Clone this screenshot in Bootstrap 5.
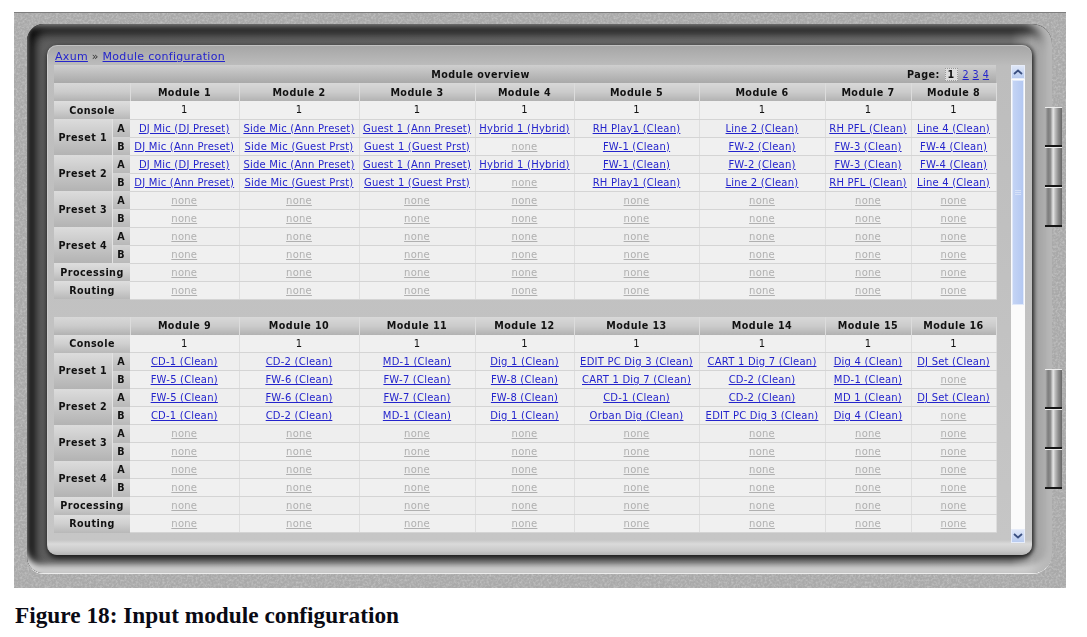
<!DOCTYPE html>
<html lang="en">
<head>
<meta charset="utf-8">
<title>Figure 18: Input module configuration</title>
<link rel="stylesheet" href="https://cdn.jsdelivr.net/npm/bootstrap@5.3.0/dist/css/bootstrap.min.css">
<style>
html,body{background:#fff;margin:0;overflow:hidden}
body{font-family:"DejaVu Sans",Verdana,sans-serif;font-size:10px;color:#111}
.shot{width:1052px;height:576px;margin:12px 0 0 14px;padding:11px 14px 15px 13px;background:#a9a9a9;position:relative;border-top:1px solid #7d7d7d;overflow:hidden;filter:blur(.3px)}
.grain{position:absolute;inset:0;width:100%;height:100%;opacity:.42}
.bezel{position:relative;height:549px;padding:21px 20px 18px 20px;border-radius:17px 20px 20px 16px;background:linear-gradient(to right,#5e5e5e 0,#747474 96%,#a6a6a6 98%,#9a9a9a 100%);
box-shadow:inset -9px 0 8px 1px #b8b8b8,inset 0 -9px 6px -1px #dcdcdc,inset 0 9px 11px #0a0a0a,inset 8px 0 10px #161616,0 1px 0 #ececec}
.panel{height:510px;border-radius:10px;padding:4px 7px 12px 7px;background:linear-gradient(to bottom,#a6a6a6 0,#bdbdbd 20px,#c6c6c6 494px,#dadada 498px,#c8c8c8 505px,#b4b4b4 509px);border-top:1px solid #c2c2c2;border-left:1px solid #cfcfcf;box-shadow:0 3px 5px 0 #1c1c1c,2px 0 4px #4a4a4a}
.crumb{height:15px;line-height:14px;font-size:11px;letter-spacing:.3px;color:#333}
.crumb a{color:#2424cc}
.pane{height:478px;margin-left:-1px}
.grid-wrap{width:942px}
.scroll{width:14px;margin-left:15px;background:#fbfbfb;position:relative;flex:none}
.thumb{height:225px;margin:15px 1px 0 1px;background:linear-gradient(to right,#c4d4f4,#b4c8f2);border:1px solid #dfe8fa;display:flex;flex-direction:column;justify-content:center;align-items:center;gap:1px}
.thumb i{display:block;width:6px;height:1px;background:#d6e1f8}
.sbtn{position:absolute;left:0;right:0;height:14px;background:linear-gradient(#dfe7f8,#b8cbf0);border:1px solid #e7edfa}
.sbtn svg{display:block;margin:3px auto 0}
.sbtn.up{top:0}.sbtn.dn{bottom:0}
table.mods{table-layout:fixed;width:942px;margin:0;border-collapse:collapse;--bs-table-bg:transparent;--bs-table-color:#111;--bs-table-border-color:#d6d6d6}
table.mods>*>tr>*{height:18px;padding:0;border:0;vertical-align:middle;text-align:center;line-height:17px;font-size:10px;letter-spacing:.22px;white-space:nowrap;overflow:hidden}
table.mods td{background:#f0f0f0;border-bottom:1px solid #d4d4d4!important;border-right:1px solid #dedede!important}
table.mods tr:nth-child(even) td{background:#eeeeee}
table.mods td a{color:#2424cc}
table.mods td a.nil{color:#b0b0b0}
table.mods th{font-size:9.6px;font-weight:700;letter-spacing:.45px!important}
.c0{width:58px}.c1{width:18px}.c2{width:109px}.c3{width:120px}.c4{width:116px}.c5{width:99px}.c6{width:125px}.c7{width:126px}.c8{width:86px}.c9{width:85px}
.hd{background:linear-gradient(to bottom,#cfcfcf,#bcbcbc 50%,#a9a9a9)}
.hm{background:linear-gradient(to bottom,#d8d8d8,#cbcbcb 50%,#b2b2b2);border-right:1px solid #dcdcdc!important}
.lb{background:linear-gradient(to bottom,#dedede,#cfcfcf 50%,#b8b8b8)}
.pl{background:linear-gradient(to bottom,#dcdcdc,#c5c5c5 55%,#b3b3b3)}
.ab{background:linear-gradient(to bottom,#d4d4d4,#b8b8b8);border-left:1px solid #e2e2e2!important}
.ovr{height:17px;overflow:hidden}
.pg{width:89px}
.pg a{color:#2424cc;font-weight:400;letter-spacing:.2px}
.pg b{display:inline-block;background:#ddd;border:1px dotted #999;padding:0 2px;line-height:11px;margin:0 1px;vertical-align:middle}
.gap{height:17px}
.hinges{position:absolute;right:4px;width:17px}
.hinges.h1{top:94px}.hinges.h2{top:356px}
.hinges>div{height:40px;background:linear-gradient(to right,#b4b4b4 0,#7c7c7c 18%,#8c8c8c 32%,#e6e6e6 48%,#bdbdbd 60%,#8e8e8e 78%,#666 100%);border-top:1px solid #ececec;border-bottom:2px solid #161616}
.cap{font-family:"Liberation Serif","Times New Roman",serif;font-weight:700;font-size:23.3px;line-height:25px;color:#0a0a14;margin:15px 0 0 15px}
</style>
</head>
<body>
<div class="shot">
<svg class="grain" aria-hidden="true"><filter id="gr"><feTurbulence type="fractalNoise" baseFrequency=".45" numOctaves="2"/><feColorMatrix values="0 0 0 0 .85 0 0 0 0 .85 0 0 0 0 .85 1.8 0 0 0 -.7"/></filter><rect width="100%" height="100%" filter="url(#gr)"/></svg>
<div class="bezel">
<div class="panel">
<div class="crumb"><a href="#">Axum</a> » <a href="#">Module configuration</a></div>
<div class="pane d-flex">
<div class="grid-wrap">
<table class="table mods">
<colgroup><col class="c0"><col class="c1"><col class="c2"><col class="c3"><col class="c4"><col class="c5"><col class="c6"><col class="c7"><col class="c8"><col class="c9"></colgroup>
<thead>
<tr><th colspan="10" class="hd"><div class="ovr d-flex align-items-center"><span class="flex-grow-1">Module overview</span><span class="pg text-start">Page: <b>1</b> <a href="#">2</a> <a href="#">3</a> <a href="#">4</a></span></div></th></tr>
<tr><th colspan="2" class="hm"></th><th class="hm">Module 1</th><th class="hm">Module 2</th><th class="hm">Module 3</th><th class="hm">Module 4</th><th class="hm">Module 5</th><th class="hm">Module 6</th><th class="hm">Module 7</th><th class="hm">Module 8</th></tr>
</thead>
<tbody>
<tr><th colspan="2" class="lb">Console</th><td>1</td><td>1</td><td>1</td><td>1</td><td>1</td><td>1</td><td>1</td><td>1</td></tr>
<tr><th rowspan="2" class="pl">Preset 1</th><th class="ab">A</th><td><a href="#">DJ Mic (DJ Preset)</a></td><td><a href="#">Side Mic (Ann Preset)</a></td><td><a href="#">Guest 1 (Ann Preset)</a></td><td><a href="#">Hybrid 1 (Hybrid)</a></td><td><a href="#">RH Play1 (Clean)</a></td><td><a href="#">Line 2 (Clean)</a></td><td><a href="#">RH PFL (Clean)</a></td><td><a href="#">Line 4 (Clean)</a></td></tr>
<tr><th class="ab">B</th><td><a href="#">DJ Mic (Ann Preset)</a></td><td><a href="#">Side Mic (Guest Prst)</a></td><td><a href="#">Guest 1 (Guest Prst)</a></td><td><a class="nil" href="#">none</a></td><td><a href="#">FW-1 (Clean)</a></td><td><a href="#">FW-2 (Clean)</a></td><td><a href="#">FW-3 (Clean)</a></td><td><a href="#">FW-4 (Clean)</a></td></tr>
<tr><th rowspan="2" class="pl">Preset 2</th><th class="ab">A</th><td><a href="#">DJ Mic (DJ Preset)</a></td><td><a href="#">Side Mic (Ann Preset)</a></td><td><a href="#">Guest 1 (Ann Preset)</a></td><td><a href="#">Hybrid 1 (Hybrid)</a></td><td><a href="#">FW-1 (Clean)</a></td><td><a href="#">FW-2 (Clean)</a></td><td><a href="#">FW-3 (Clean)</a></td><td><a href="#">FW-4 (Clean)</a></td></tr>
<tr><th class="ab">B</th><td><a href="#">DJ Mic (Ann Preset)</a></td><td><a href="#">Side Mic (Guest Prst)</a></td><td><a href="#">Guest 1 (Guest Prst)</a></td><td><a class="nil" href="#">none</a></td><td><a href="#">RH Play1 (Clean)</a></td><td><a href="#">Line 2 (Clean)</a></td><td><a href="#">RH PFL (Clean)</a></td><td><a href="#">Line 4 (Clean)</a></td></tr>
<tr><th rowspan="2" class="pl">Preset 3</th><th class="ab">A</th><td><a class="nil" href="#">none</a></td><td><a class="nil" href="#">none</a></td><td><a class="nil" href="#">none</a></td><td><a class="nil" href="#">none</a></td><td><a class="nil" href="#">none</a></td><td><a class="nil" href="#">none</a></td><td><a class="nil" href="#">none</a></td><td><a class="nil" href="#">none</a></td></tr>
<tr><th class="ab">B</th><td><a class="nil" href="#">none</a></td><td><a class="nil" href="#">none</a></td><td><a class="nil" href="#">none</a></td><td><a class="nil" href="#">none</a></td><td><a class="nil" href="#">none</a></td><td><a class="nil" href="#">none</a></td><td><a class="nil" href="#">none</a></td><td><a class="nil" href="#">none</a></td></tr>
<tr><th rowspan="2" class="pl">Preset 4</th><th class="ab">A</th><td><a class="nil" href="#">none</a></td><td><a class="nil" href="#">none</a></td><td><a class="nil" href="#">none</a></td><td><a class="nil" href="#">none</a></td><td><a class="nil" href="#">none</a></td><td><a class="nil" href="#">none</a></td><td><a class="nil" href="#">none</a></td><td><a class="nil" href="#">none</a></td></tr>
<tr><th class="ab">B</th><td><a class="nil" href="#">none</a></td><td><a class="nil" href="#">none</a></td><td><a class="nil" href="#">none</a></td><td><a class="nil" href="#">none</a></td><td><a class="nil" href="#">none</a></td><td><a class="nil" href="#">none</a></td><td><a class="nil" href="#">none</a></td><td><a class="nil" href="#">none</a></td></tr>
<tr><th colspan="2" class="lb">Processing</th><td><a class="nil" href="#">none</a></td><td><a class="nil" href="#">none</a></td><td><a class="nil" href="#">none</a></td><td><a class="nil" href="#">none</a></td><td><a class="nil" href="#">none</a></td><td><a class="nil" href="#">none</a></td><td><a class="nil" href="#">none</a></td><td><a class="nil" href="#">none</a></td></tr>
<tr><th colspan="2" class="lb">Routing</th><td><a class="nil" href="#">none</a></td><td><a class="nil" href="#">none</a></td><td><a class="nil" href="#">none</a></td><td><a class="nil" href="#">none</a></td><td><a class="nil" href="#">none</a></td><td><a class="nil" href="#">none</a></td><td><a class="nil" href="#">none</a></td><td><a class="nil" href="#">none</a></td></tr>
</tbody>
</table>
<div class="gap"></div>
<table class="table mods">
<colgroup><col class="c0"><col class="c1"><col class="c2"><col class="c3"><col class="c4"><col class="c5"><col class="c6"><col class="c7"><col class="c8"><col class="c9"></colgroup>
<thead>
<tr><th colspan="2" class="hm"></th><th class="hm">Module 9</th><th class="hm">Module 10</th><th class="hm">Module 11</th><th class="hm">Module 12</th><th class="hm">Module 13</th><th class="hm">Module 14</th><th class="hm">Module 15</th><th class="hm">Module 16</th></tr>
</thead>
<tbody>
<tr><th colspan="2" class="lb">Console</th><td>1</td><td>1</td><td>1</td><td>1</td><td>1</td><td>1</td><td>1</td><td>1</td></tr>
<tr><th rowspan="2" class="pl">Preset 1</th><th class="ab">A</th><td><a href="#">CD-1 (Clean)</a></td><td><a href="#">CD-2 (Clean)</a></td><td><a href="#">MD-1 (Clean)</a></td><td><a href="#">Dig 1 (Clean)</a></td><td><a href="#">EDIT PC Dig 3 (Clean)</a></td><td><a href="#">CART 1 Dig 7 (Clean)</a></td><td><a href="#">Dig 4 (Clean)</a></td><td><a href="#">DJ Set (Clean)</a></td></tr>
<tr><th class="ab">B</th><td><a href="#">FW-5 (Clean)</a></td><td><a href="#">FW-6 (Clean)</a></td><td><a href="#">FW-7 (Clean)</a></td><td><a href="#">FW-8 (Clean)</a></td><td><a href="#">CART 1 Dig 7 (Clean)</a></td><td><a href="#">CD-2 (Clean)</a></td><td><a href="#">MD-1 (Clean)</a></td><td><a class="nil" href="#">none</a></td></tr>
<tr><th rowspan="2" class="pl">Preset 2</th><th class="ab">A</th><td><a href="#">FW-5 (Clean)</a></td><td><a href="#">FW-6 (Clean)</a></td><td><a href="#">FW-7 (Clean)</a></td><td><a href="#">FW-8 (Clean)</a></td><td><a href="#">CD-1 (Clean)</a></td><td><a href="#">CD-2 (Clean)</a></td><td><a href="#">MD 1 (Clean)</a></td><td><a href="#">DJ Set (Clean)</a></td></tr>
<tr><th class="ab">B</th><td><a href="#">CD-1 (Clean)</a></td><td><a href="#">CD-2 (Clean)</a></td><td><a href="#">MD-1 (Clean)</a></td><td><a href="#">Dig 1 (Clean)</a></td><td><a href="#">Orban Dig (Clean)</a></td><td><a href="#">EDIT PC Dig 3 (Clean)</a></td><td><a href="#">Dig 4 (Clean)</a></td><td><a class="nil" href="#">none</a></td></tr>
<tr><th rowspan="2" class="pl">Preset 3</th><th class="ab">A</th><td><a class="nil" href="#">none</a></td><td><a class="nil" href="#">none</a></td><td><a class="nil" href="#">none</a></td><td><a class="nil" href="#">none</a></td><td><a class="nil" href="#">none</a></td><td><a class="nil" href="#">none</a></td><td><a class="nil" href="#">none</a></td><td><a class="nil" href="#">none</a></td></tr>
<tr><th class="ab">B</th><td><a class="nil" href="#">none</a></td><td><a class="nil" href="#">none</a></td><td><a class="nil" href="#">none</a></td><td><a class="nil" href="#">none</a></td><td><a class="nil" href="#">none</a></td><td><a class="nil" href="#">none</a></td><td><a class="nil" href="#">none</a></td><td><a class="nil" href="#">none</a></td></tr>
<tr><th rowspan="2" class="pl">Preset 4</th><th class="ab">A</th><td><a class="nil" href="#">none</a></td><td><a class="nil" href="#">none</a></td><td><a class="nil" href="#">none</a></td><td><a class="nil" href="#">none</a></td><td><a class="nil" href="#">none</a></td><td><a class="nil" href="#">none</a></td><td><a class="nil" href="#">none</a></td><td><a class="nil" href="#">none</a></td></tr>
<tr><th class="ab">B</th><td><a class="nil" href="#">none</a></td><td><a class="nil" href="#">none</a></td><td><a class="nil" href="#">none</a></td><td><a class="nil" href="#">none</a></td><td><a class="nil" href="#">none</a></td><td><a class="nil" href="#">none</a></td><td><a class="nil" href="#">none</a></td><td><a class="nil" href="#">none</a></td></tr>
<tr><th colspan="2" class="lb">Processing</th><td><a class="nil" href="#">none</a></td><td><a class="nil" href="#">none</a></td><td><a class="nil" href="#">none</a></td><td><a class="nil" href="#">none</a></td><td><a class="nil" href="#">none</a></td><td><a class="nil" href="#">none</a></td><td><a class="nil" href="#">none</a></td><td><a class="nil" href="#">none</a></td></tr>
<tr><th colspan="2" class="lb">Routing</th><td><a class="nil" href="#">none</a></td><td><a class="nil" href="#">none</a></td><td><a class="nil" href="#">none</a></td><td><a class="nil" href="#">none</a></td><td><a class="nil" href="#">none</a></td><td><a class="nil" href="#">none</a></td><td><a class="nil" href="#">none</a></td><td><a class="nil" href="#">none</a></td></tr>
</tbody>
</table>
</div>
<div class="scroll">
<div class="sbtn up"><svg width="10" height="6" viewBox="0 0 10 6"><path d="M1 5 5 1.500 9 5" fill="none" stroke="#3a4f80" stroke-width="1.800"/></svg></div>
<div class="thumb"><i></i><i></i><i></i></div>
<div class="sbtn dn"><svg width="10" height="6" viewBox="0 0 10 6"><path d="M1 1 5 4.500 9 1" fill="none" stroke="#3a4f80" stroke-width="1.800"/></svg></div>
</div>
</div>
</div>
</div>
<div class="hinges h1"><div></div><div></div><div></div></div>
<div class="hinges h2"><div></div><div></div><div></div></div>
</div>
<div class="cap">Figure 18: Input module configuration</div>
<script src="https://cdn.jsdelivr.net/npm/bootstrap@5.3.0/dist/js/bootstrap.bundle.min.js"></script>
</body>
</html>
